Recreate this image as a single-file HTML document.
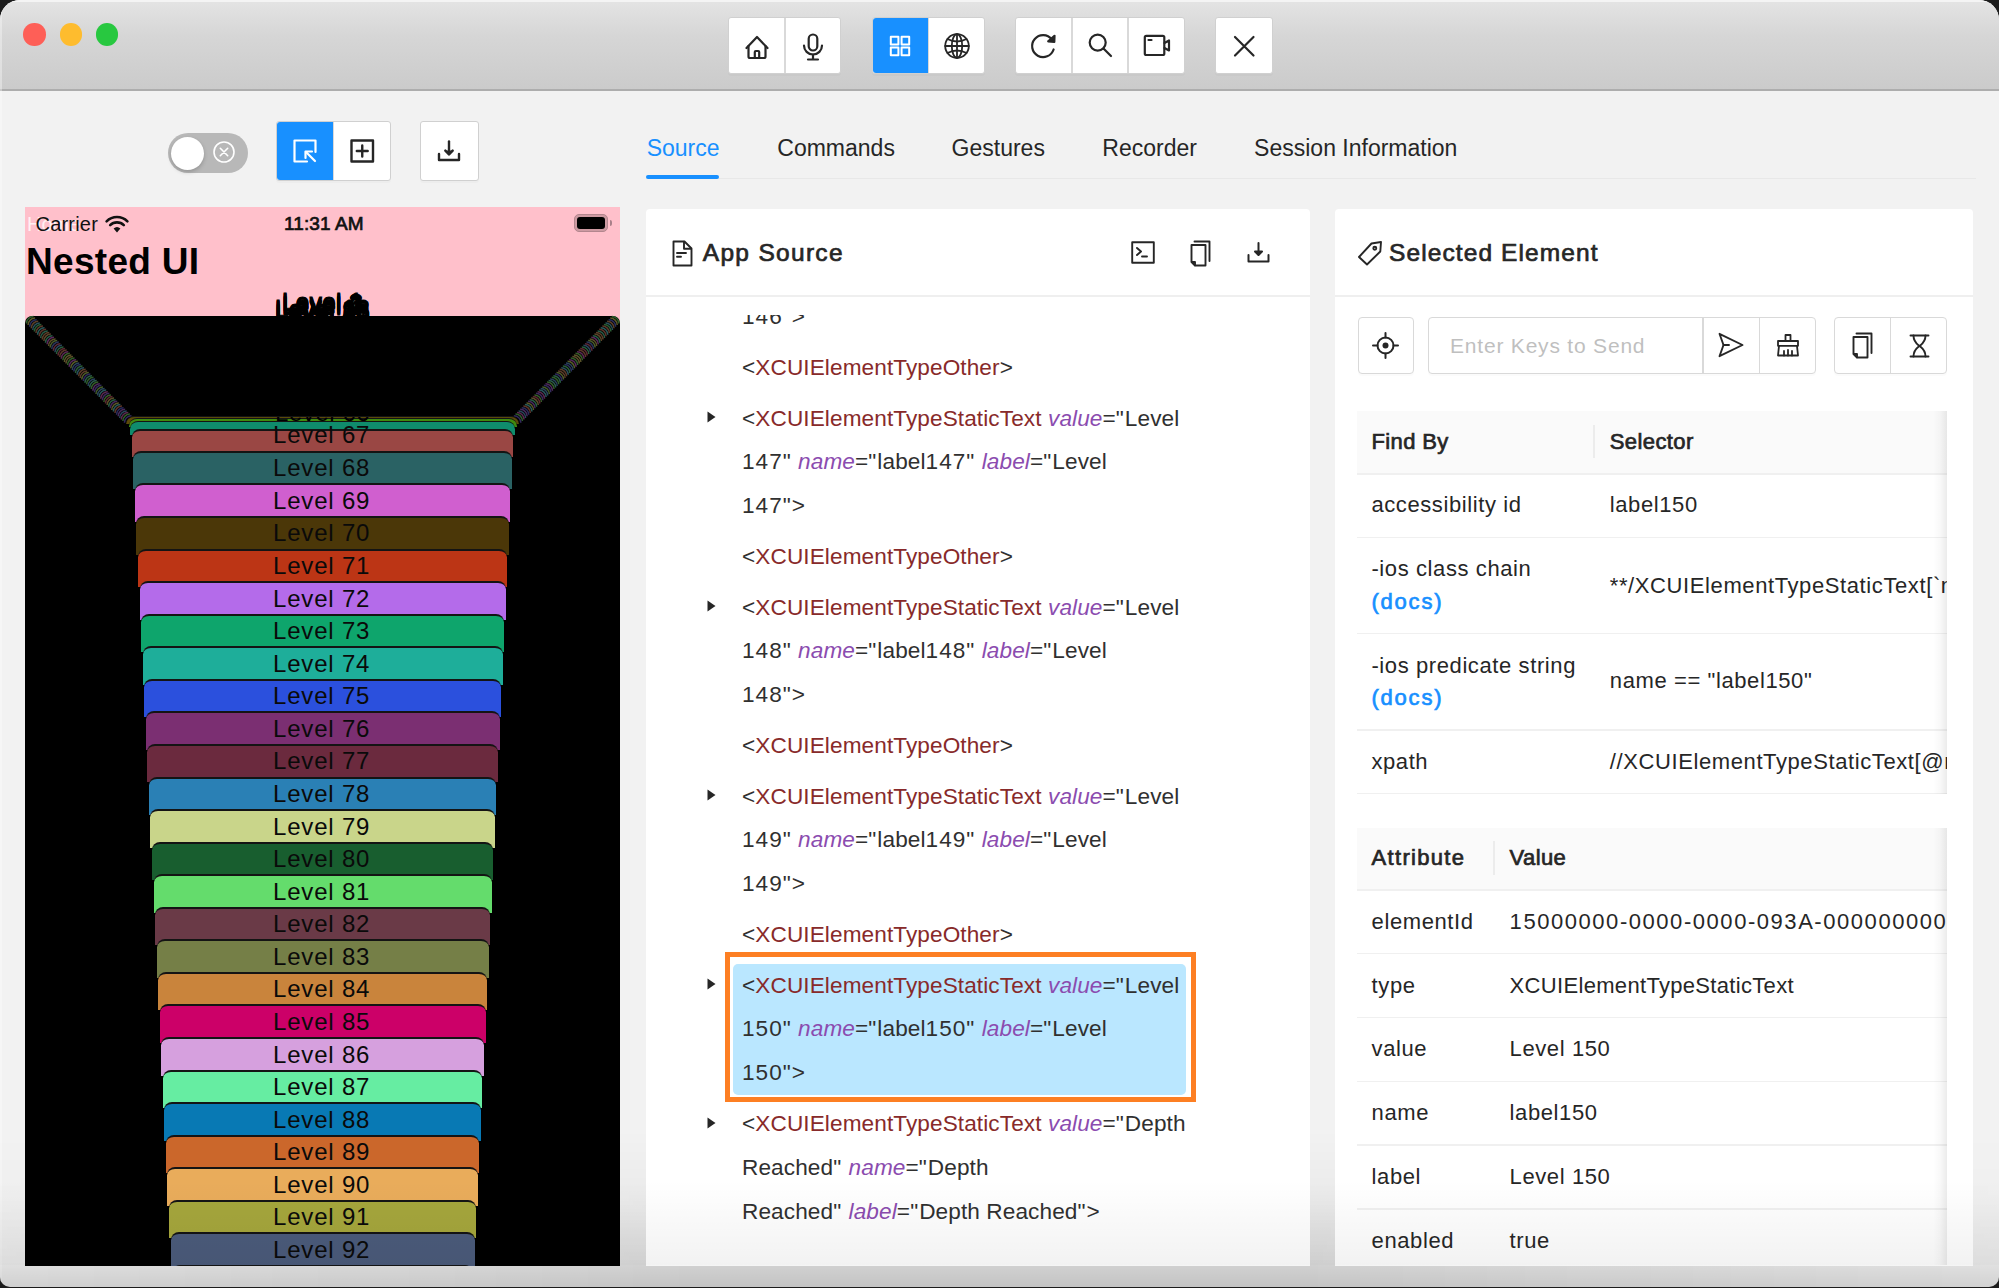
<!DOCTYPE html><html><head><meta charset="utf-8"><style>
*{margin:0;padding:0;box-sizing:border-box}
html,body{width:1999px;height:1288px;overflow:hidden;background:#1c1c1c;font-family:"Liberation Sans", sans-serif}
.a{position:absolute}
#win{position:absolute;left:0;top:0;width:1999px;height:1287px;border-radius:20px 20px 10px 10px;overflow:hidden;background:#f2f2f2}
.btn{position:absolute;background:#fff;border:1.5px solid #d9d9d9;}
.txt{position:absolute;white-space:pre;line-height:1}
svg{position:absolute;overflow:visible}
.d{font-style:normal;letter-spacing:1.0px}
</style></head><body><div id="win">
<div class="a" style="left:0;top:0;width:1999px;height:90.5px;background:linear-gradient(#e4e4e4,#d6d6d6 40%,#cbcbcb);border-bottom:2px solid #adadad"></div><div class="a" style="left:0;top:0;width:1999px;height:2px;background:#f4f4f4"></div><div class="a" style="left:0;top:0;width:1.5px;height:1287px;background:rgba(255,255,255,0.35)"></div><div class="a" style="left:23.400000000000002px;top:23.3px;width:22.4px;height:22.4px;border-radius:50%;background:#fe5f57"></div><div class="a" style="left:59.7px;top:23.3px;width:22.4px;height:22.4px;border-radius:50%;background:#febc2e"></div><div class="a" style="left:95.8px;top:23.3px;width:22.4px;height:22.4px;border-radius:50%;background:#28c840"></div><div class="a" style="left:728px;top:17px;width:113px;height:56.5px;background:#fff;border:1.5px solid #d0d0d0;border-radius:3px;box-shadow:0 2px 0 rgba(0,0,0,0.02)"></div><div class="a" style="left:784.25px;top:18px;width:1.5px;height:55px;background:#d9d9d9"></div><div class="a" style="left:872px;top:17px;width:113px;height:56.5px;background:#fff;border:1.5px solid #d0d0d0;border-radius:3px;box-shadow:0 2px 0 rgba(0,0,0,0.02)"></div><div class="a" style="left:927.25px;top:18px;width:1.5px;height:55px;background:#d9d9d9"></div><div class="a" style="left:873px;top:18px;width:55px;height:55px;background:#1890ff;border-radius:3px 0px 0px 3px"></div><div class="a" style="left:1015px;top:17px;width:170px;height:56.5px;background:#fff;border:1.5px solid #d0d0d0;border-radius:3px;box-shadow:0 2px 0 rgba(0,0,0,0.02)"></div><div class="a" style="left:1071.25px;top:18px;width:1.5px;height:55px;background:#d9d9d9"></div><div class="a" style="left:1127.25px;top:18px;width:1.5px;height:55px;background:#d9d9d9"></div><div class="a" style="left:1215px;top:17px;width:58px;height:56.5px;background:#fff;border:1.5px solid #d0d0d0;border-radius:3px;box-shadow:0 2px 0 rgba(0,0,0,0.02)"></div><svg style="left:744.5px;top:35px" width="24" height="24" viewBox="0 0 24 24" fill="none" stroke="#262626" stroke-width="2.2" stroke-linecap="round" stroke-linejoin="round"><path d="M1.5 13 L12 2 L22.5 13"/><path d="M3.5 11 V21.5 a1.5 1.5 0 0 0 1.5 1.5 H19 a1.5 1.5 0 0 0 1.5 -1.5 V11"/><path d="M9.8 23 V17 a1 1 0 0 1 1 -1 h2.4 a1 1 0 0 1 1 1 V23"/></svg><svg style="left:802px;top:33px" width="22" height="28" viewBox="0 0 22 28" fill="none" stroke="#262626" stroke-width="2.2" stroke-linecap="round" stroke-linejoin="round"><rect x="6.7" y="1.5" width="8.6" height="16" rx="4.3"/><path d="M2 12.5 a9 9 0 0 0 18 0"/><path d="M11 21.5 V26.5 M6 26.5 H16"/></svg><svg style="left:889px;top:34.5px" width="22" height="22" viewBox="0 0 22 22" fill="none" stroke="#fff" stroke-width="2" stroke-linecap="round" stroke-linejoin="round"><rect x="1.8" y="1.8" width="7.6" height="7.6"/><rect x="12.6" y="1.8" width="7.6" height="7.6"/><rect x="1.8" y="12.6" width="7.6" height="7.6"/><rect x="12.6" y="12.6" width="7.6" height="7.6"/></svg><svg style="left:943.5px;top:33px" width="26" height="26" viewBox="0 0 26 26" fill="none" stroke="#262626" stroke-width="1.8" stroke-linecap="round" stroke-linejoin="round"><circle cx="13" cy="13" r="11.8"/><path d="M1.2 13 H24.8 M13 1.2 V24.8"/><ellipse cx="13" cy="13" rx="5.2" ry="11.8"/><path d="M3.5 6 Q13 11 22.5 6 M3.5 20 Q13 15 22.5 20"/></svg><svg style="left:1031px;top:33px" width="26" height="26" viewBox="0 0 26 26" fill="none" stroke="#262626" stroke-width="2.2" stroke-linecap="round" stroke-linejoin="round"><path d="M22.6 16.5 A11 11 0 1 1 20.8 6.3"/><path d="M23.5 2.8 L23.3 9 L17.2 8.3 Z" fill="#262626"/></svg><svg style="left:1088px;top:33px" width="26" height="26" viewBox="0 0 26 26" fill="none" stroke="#262626" stroke-width="2.2" stroke-linecap="round" stroke-linejoin="round"><circle cx="9.7" cy="9.6" r="8"/><path d="M15.5 15.5 L23 23"/></svg><svg style="left:1143px;top:34px" width="28" height="23" viewBox="0 0 28 23" fill="none" stroke="#262626" stroke-width="2.2" stroke-linecap="round" stroke-linejoin="round"><rect x="1.8" y="1.8" width="19.5" height="19.2" rx="1.5"/><path d="M21.5 9 L26 6.5 V16.5 L21.5 14"/><path d="M5.5 6 H8.5"/></svg><svg style="left:1233px;top:34.5px" width="22" height="22" viewBox="0 0 22 22" fill="none" stroke="#262626" stroke-width="2.2" stroke-linecap="round" stroke-linejoin="round"><path d="M2 2 L20.5 20.5 M20.5 2 L2 20.5"/></svg><div class="a" style="left:167.5px;top:133px;width:80px;height:40px;border-radius:20px;background:#b8b8b8"></div><div class="a" style="left:170.5px;top:136.5px;width:33px;height:33px;border-radius:50%;background:#fff;box-shadow:0 2px 4px rgba(0,0,0,0.2)"></div><svg style="left:212.5px;top:140.5px" width="22" height="22" viewBox="0 0 22 22" fill="none" stroke="#fff" stroke-width="1.6" stroke-linecap="round" stroke-linejoin="round"><circle cx="11" cy="11" r="10"/><path d="M7.3 7.3 L14.7 14.7 M14.7 7.3 L7.3 14.7"/></svg><div class="a" style="left:275.5px;top:121px;width:115.5px;height:59.5px;background:#fff;border:1.5px solid #d0d0d0;border-radius:3px;box-shadow:0 2px 0 rgba(0,0,0,0.02)"></div><div class="a" style="left:332.25px;top:122px;width:1.5px;height:58px;background:#d9d9d9"></div><div class="a" style="left:276.5px;top:122px;width:56.5px;height:58px;background:#1890ff;border-radius:3px 0px 0px 3px"></div><div class="a" style="left:420px;top:121px;width:58.5px;height:59.5px;background:#fff;border:1.5px solid #d0d0d0;border-radius:3px;box-shadow:0 2px 0 rgba(0,0,0,0.02)"></div><svg style="left:293px;top:139px" width="24" height="24" viewBox="0 0 24 24" fill="none" stroke="#fff" stroke-width="2.2" stroke-linecap="round" stroke-linejoin="round"><path d="M14 22.5 H1.5 V1.5 H22.5 V13"/><path d="M22 22 L13 13"/><path d="M12.5 19 V12.5 H19"/></svg><svg style="left:349.5px;top:139px" width="25" height="24" viewBox="0 0 25 24" fill="none" stroke="#262626" stroke-width="2.4" stroke-linecap="round" stroke-linejoin="round"><rect x="1.5" y="1.5" width="21.5" height="21"/><path d="M12.25 6.5 V17.5 M6.8 12 H17.7"/></svg><svg style="left:437px;top:140px" width="24" height="22" viewBox="0 0 24 22" fill="none" stroke="#262626" stroke-width="2.4" stroke-linecap="round" stroke-linejoin="round"><path d="M12 1.5 V14"/><path d="M8.3 10.6 L12 14.5 L15.7 10.6" fill="#262626"/><path d="M2 14 V20 H22 V14"/></svg><div class="a" style="left:646px;top:177.6px;width:1330px;height:1.5px;background:#e8e8e8"></div><div class="txt" style="left:646.7px;top:137.03px;font-size:23px;color:#1890ff;font-weight:400;font-style:normal;">Source</div><div class="txt" style="left:777.3px;top:137.03px;font-size:23px;color:#262626;font-weight:400;font-style:normal;">Commands</div><div class="txt" style="left:951.6px;top:137.03px;font-size:23px;color:#262626;font-weight:400;font-style:normal;">Gestures</div><div class="txt" style="left:1102.3px;top:137.03px;font-size:23px;color:#262626;font-weight:400;font-style:normal;">Recorder</div><div class="txt" style="left:1254.1px;top:137.03px;font-size:23px;color:#262626;font-weight:400;font-style:normal;">Session Information</div><div class="a" style="left:645.5px;top:174.5px;width:73px;height:4px;background:#1890ff;border-radius:2px"></div><div class="a" style="left:0;top:1130px;width:1999px;height:158px;background:linear-gradient(rgba(0,0,0,0),rgba(0,0,0,0.03) 44%,rgba(0,0,0,0.1) 85.5%,rgba(0,0,0,0.1));-webkit-mask-image:linear-gradient(to right,rgba(0,0,0,0.4),#000 35%,#000 65%,rgba(0,0,0,0.35))"></div><div class="a" style="left:25px;top:207px;width:595px;height:1058.5px;background:#ffc0cb;overflow:hidden"><div class="txt" style="left:2px;top:6.67px;font-size:20px;color:rgba(255,255,255,0.8);font-weight:400;font-style:normal;">Home</div><div class="txt" style="left:10.5px;top:6.67px;font-size:20px;color:#111;font-weight:400;font-style:normal;letter-spacing:0.2px">Carrier</div><svg style="left:79.5px;top:7.5px" width="24" height="18" viewBox="0 0 24 18"><path d="M12 17.5 L8.6 13.6 A5 5 0 0 1 15.4 13.6 Z" fill="#111"/><path d="M5.2 10.2 A9.6 9.6 0 0 1 18.8 10.2" fill="none" stroke="#111" stroke-width="2.6" stroke-linecap="round"/><path d="M1.6 6.3 A14.8 14.8 0 0 1 22.4 6.3" fill="none" stroke="#111" stroke-width="2.6" stroke-linecap="round"/></svg><div class="txt" style="left:259px;top:7.42px;font-size:19px;color:#111;font-weight:400;font-style:normal;-webkit-text-stroke:0.7px #111;letter-spacing:0.1px">11:31 AM</div><div class="a" style="left:549px;top:7.099999999999994px;width:34px;height:17.6px;border:1.6px solid #b3868e;border-radius:5px;padding:1.6px;background:#cd9aa2"><div style="width:100%;height:100%;background:#000;border-radius:3px"></div></div><div class="a" style="left:584.6px;top:13.300000000000011px;width:2px;height:5.5px;background:#a9808a;border-radius:0 3px 3px 0"></div><div class="txt" style="left:1.1000000000000014px;top:36.38px;font-size:37px;color:#000;font-weight:700;font-style:normal;letter-spacing:0.3px">Nested UI</div><div class="a" style="left:0;top:78px;width:595px;height:31px;overflow:hidden"><div class="txt" style="left:0;width:595px;text-align:center;top:4.98px;font-size:24px;color:#000;letter-spacing:0.55px;-webkit-text-stroke:0.8px #000">Level 1</div><div class="txt" style="left:0;width:595px;text-align:center;top:6.33px;font-size:24px;color:#000;letter-spacing:0.55px;-webkit-text-stroke:0.8px #000">Level 3</div><div class="txt" style="left:0;width:595px;text-align:center;top:7.68px;font-size:24px;color:#000;letter-spacing:0.55px;-webkit-text-stroke:0.8px #000">Level 5</div><div class="txt" style="left:0;width:595px;text-align:center;top:9.03px;font-size:24px;color:#000;letter-spacing:0.55px;-webkit-text-stroke:0.8px #000">Level 7</div><div class="txt" style="left:0;width:595px;text-align:center;top:10.38px;font-size:24px;color:#000;letter-spacing:0.55px;-webkit-text-stroke:0.8px #000">Level 9</div><div class="txt" style="left:0;width:595px;text-align:center;top:11.73px;font-size:24px;color:#000;letter-spacing:0.55px;-webkit-text-stroke:0.8px #000">Level 12</div><div class="txt" style="left:0;width:595px;text-align:center;top:13.08px;font-size:24px;color:#000;letter-spacing:0.55px;-webkit-text-stroke:0.8px #000">Level 18</div><div class="txt" style="left:0;width:595px;text-align:center;top:14.43px;font-size:24px;color:#000;letter-spacing:0.55px;-webkit-text-stroke:0.8px #000">Level 25</div><div class="txt" style="left:0;width:595px;text-align:center;top:15.78px;font-size:24px;color:#000;letter-spacing:0.55px;-webkit-text-stroke:0.8px #000">Level 33</div><div class="txt" style="left:0;width:595px;text-align:center;top:17.13px;font-size:24px;color:#000;letter-spacing:0.55px;-webkit-text-stroke:0.8px #000">Level 41</div><div class="txt" style="left:0;width:595px;text-align:center;top:18.48px;font-size:24px;color:#000;letter-spacing:0.55px;-webkit-text-stroke:0.8px #000">Level 50</div><div class="txt" style="left:0;width:595px;text-align:center;top:19.83px;font-size:24px;color:#000;letter-spacing:0.55px;-webkit-text-stroke:0.8px #000">Level 58</div></div><div class="a" style="left:0;top:109px;width:595px;height:1000px;background:#000;border-radius:7px 7px 0 0"></div><svg style="left:0;top:0" width="595" height="400" fill="none" stroke-width="1.5"><path d="M1.50 116.50 A7 7 0 0 1 8.50 109.50" stroke="#2c5b29"/><path d="M586.80 109.50 A7 7 0 0 1 593.80 116.50" stroke="#2c5b29"/><path d="M3.08 118.10 A7 7 0 0 1 10.08 111.10" stroke="#5b5729"/><path d="M585.22 111.10 A7 7 0 0 1 592.22 118.10" stroke="#5b5729"/><path d="M4.66 119.70 A7 7 0 0 1 11.66 112.70" stroke="#292e5b"/><path d="M583.64 112.70 A7 7 0 0 1 590.64 119.70" stroke="#292e5b"/><path d="M6.24 121.30 A7 7 0 0 1 13.24 114.30" stroke="#5b3f29"/><path d="M582.06 114.30 A7 7 0 0 1 589.06 121.30" stroke="#5b3f29"/><path d="M7.82 122.90 A7 7 0 0 1 14.82 115.90" stroke="#29505b"/><path d="M580.48 115.90 A7 7 0 0 1 587.48 122.90" stroke="#29505b"/><path d="M9.40 124.50 A7 7 0 0 1 16.40 117.50" stroke="#295b33"/><path d="M578.90 117.50 A7 7 0 0 1 585.90 124.50" stroke="#295b33"/><path d="M10.98 126.10 A7 7 0 0 1 17.98 119.10" stroke="#5b3a29"/><path d="M577.32 119.10 A7 7 0 0 1 584.32 126.10" stroke="#5b3a29"/><path d="M12.56 127.70 A7 7 0 0 1 19.56 120.70" stroke="#29595b"/><path d="M575.74 120.70 A7 7 0 0 1 582.74 127.70" stroke="#29595b"/><path d="M14.14 129.30 A7 7 0 0 1 21.14 122.30" stroke="#5b3429"/><path d="M574.16 122.30 A7 7 0 0 1 581.16 129.30" stroke="#5b3429"/><path d="M15.72 130.90 A7 7 0 0 1 22.72 123.90" stroke="#295b47"/><path d="M572.58 123.90 A7 7 0 0 1 579.58 130.90" stroke="#295b47"/><path d="M17.30 132.50 A7 7 0 0 1 24.30 125.50" stroke="#5b3e29"/><path d="M571.00 125.50 A7 7 0 0 1 578.00 132.50" stroke="#5b3e29"/><path d="M18.88 134.10 A7 7 0 0 1 25.88 127.10" stroke="#5b4429"/><path d="M569.42 127.10 A7 7 0 0 1 576.42 134.10" stroke="#5b4429"/><path d="M20.46 135.70 A7 7 0 0 1 27.46 128.70" stroke="#295b44"/><path d="M567.84 128.70 A7 7 0 0 1 574.84 135.70" stroke="#295b44"/><path d="M22.04 137.30 A7 7 0 0 1 29.04 130.30" stroke="#59295b"/><path d="M566.26 130.30 A7 7 0 0 1 573.26 137.30" stroke="#59295b"/><path d="M23.62 138.90 A7 7 0 0 1 30.62 131.90" stroke="#5b4e29"/><path d="M564.68 131.90 A7 7 0 0 1 571.68 138.90" stroke="#5b4e29"/><path d="M25.20 140.50 A7 7 0 0 1 32.20 133.50" stroke="#4a5b29"/><path d="M563.10 133.50 A7 7 0 0 1 570.10 140.50" stroke="#4a5b29"/><path d="M26.78 142.10 A7 7 0 0 1 33.78 135.10" stroke="#29355b"/><path d="M561.52 135.10 A7 7 0 0 1 568.52 142.10" stroke="#29355b"/><path d="M28.36 143.70 A7 7 0 0 1 35.36 136.70" stroke="#5b2939"/><path d="M559.94 136.70 A7 7 0 0 1 566.94 143.70" stroke="#5b2939"/><path d="M29.94 145.30 A7 7 0 0 1 36.94 138.30" stroke="#29445b"/><path d="M558.36 138.30 A7 7 0 0 1 565.36 145.30" stroke="#29445b"/><path d="M31.52 146.90 A7 7 0 0 1 38.52 139.90" stroke="#295b3c"/><path d="M556.78 139.90 A7 7 0 0 1 563.78 146.90" stroke="#295b3c"/><path d="M33.10 148.50 A7 7 0 0 1 40.10 141.50" stroke="#5b2930"/><path d="M555.20 141.50 A7 7 0 0 1 562.20 148.50" stroke="#5b2930"/><path d="M34.68 150.10 A7 7 0 0 1 41.68 143.10" stroke="#5b3729"/><path d="M553.62 143.10 A7 7 0 0 1 560.62 150.10" stroke="#5b3729"/><path d="M36.26 151.70 A7 7 0 0 1 43.26 144.70" stroke="#5b2954"/><path d="M552.04 144.70 A7 7 0 0 1 559.04 151.70" stroke="#5b2954"/><path d="M37.84 153.30 A7 7 0 0 1 44.84 146.30" stroke="#365b29"/><path d="M550.46 146.30 A7 7 0 0 1 557.46 153.30" stroke="#365b29"/><path d="M39.42 154.90 A7 7 0 0 1 46.42 147.90" stroke="#5b5529"/><path d="M548.88 147.90 A7 7 0 0 1 555.88 154.90" stroke="#5b5529"/><path d="M41.00 156.50 A7 7 0 0 1 48.00 149.50" stroke="#5b4c29"/><path d="M547.30 149.50 A7 7 0 0 1 554.30 156.50" stroke="#5b4c29"/><path d="M42.58 158.10 A7 7 0 0 1 49.58 151.10" stroke="#305b29"/><path d="M545.72 151.10 A7 7 0 0 1 552.72 158.10" stroke="#305b29"/><path d="M44.16 159.70 A7 7 0 0 1 51.16 152.70" stroke="#56295b"/><path d="M544.14 152.70 A7 7 0 0 1 551.14 159.70" stroke="#56295b"/><path d="M45.74 161.30 A7 7 0 0 1 52.74 154.30" stroke="#575b29"/><path d="M542.56 154.30 A7 7 0 0 1 549.56 161.30" stroke="#575b29"/><path d="M47.32 162.90 A7 7 0 0 1 54.32 155.90" stroke="#29435b"/><path d="M540.98 155.90 A7 7 0 0 1 547.98 162.90" stroke="#29435b"/><path d="M48.90 164.50 A7 7 0 0 1 55.90 157.50" stroke="#29315b"/><path d="M539.40 157.50 A7 7 0 0 1 546.40 164.50" stroke="#29315b"/><path d="M50.48 166.10 A7 7 0 0 1 57.48 159.10" stroke="#295b35"/><path d="M537.82 159.10 A7 7 0 0 1 544.82 166.10" stroke="#295b35"/><path d="M52.06 167.70 A7 7 0 0 1 59.06 160.70" stroke="#294d5b"/><path d="M536.24 160.70 A7 7 0 0 1 543.24 167.70" stroke="#294d5b"/><path d="M53.64 169.30 A7 7 0 0 1 60.64 162.30" stroke="#5b3c29"/><path d="M534.66 162.30 A7 7 0 0 1 541.66 169.30" stroke="#5b3c29"/><path d="M55.22 170.90 A7 7 0 0 1 62.22 163.90" stroke="#5b3b29"/><path d="M533.08 163.90 A7 7 0 0 1 540.08 170.90" stroke="#5b3b29"/><path d="M56.80 172.50 A7 7 0 0 1 63.80 165.50" stroke="#4f5b29"/><path d="M531.50 165.50 A7 7 0 0 1 538.50 172.50" stroke="#4f5b29"/><path d="M58.38 174.10 A7 7 0 0 1 65.38 167.10" stroke="#2d295b"/><path d="M529.92 167.10 A7 7 0 0 1 536.92 174.10" stroke="#2d295b"/><path d="M59.96 175.70 A7 7 0 0 1 66.96 168.70" stroke="#295b45"/><path d="M528.34 168.70 A7 7 0 0 1 535.34 175.70" stroke="#295b45"/><path d="M61.54 177.30 A7 7 0 0 1 68.54 170.30" stroke="#2f5b29"/><path d="M526.76 170.30 A7 7 0 0 1 533.76 177.30" stroke="#2f5b29"/><path d="M63.12 178.90 A7 7 0 0 1 70.12 171.90" stroke="#29415b"/><path d="M525.18 171.90 A7 7 0 0 1 532.18 178.90" stroke="#29415b"/><path d="M64.70 180.50 A7 7 0 0 1 71.70 173.50" stroke="#295b4d"/><path d="M523.60 173.50 A7 7 0 0 1 530.60 180.50" stroke="#295b4d"/><path d="M66.28 182.10 A7 7 0 0 1 73.28 175.10" stroke="#335b29"/><path d="M522.02 175.10 A7 7 0 0 1 529.02 182.10" stroke="#335b29"/><path d="M67.86 183.70 A7 7 0 0 1 74.86 176.70" stroke="#4f295b"/><path d="M520.44 176.70 A7 7 0 0 1 527.44 183.70" stroke="#4f295b"/><path d="M69.44 185.30 A7 7 0 0 1 76.44 178.30" stroke="#33295b"/><path d="M518.86 178.30 A7 7 0 0 1 525.86 185.30" stroke="#33295b"/><path d="M71.02 186.90 A7 7 0 0 1 78.02 179.90" stroke="#445b29"/><path d="M517.28 179.90 A7 7 0 0 1 524.28 186.90" stroke="#445b29"/><path d="M72.60 188.50 A7 7 0 0 1 79.60 181.50" stroke="#29455b"/><path d="M515.70 181.50 A7 7 0 0 1 522.70 188.50" stroke="#29455b"/><path d="M74.18 190.10 A7 7 0 0 1 81.18 183.10" stroke="#29545b"/><path d="M514.12 183.10 A7 7 0 0 1 521.12 190.10" stroke="#29545b"/><path d="M75.76 191.70 A7 7 0 0 1 82.76 184.70" stroke="#5b294f"/><path d="M512.54 184.70 A7 7 0 0 1 519.54 191.70" stroke="#5b294f"/><path d="M77.34 193.30 A7 7 0 0 1 84.34 186.30" stroke="#3c295b"/><path d="M510.96 186.30 A7 7 0 0 1 517.96 193.30" stroke="#3c295b"/><path d="M78.92 194.90 A7 7 0 0 1 85.92 187.90" stroke="#375b29"/><path d="M509.38 187.90 A7 7 0 0 1 516.38 194.90" stroke="#375b29"/><path d="M80.50 196.50 A7 7 0 0 1 87.50 189.50" stroke="#5b292f"/><path d="M507.80 189.50 A7 7 0 0 1 514.80 196.50" stroke="#5b292f"/><path d="M82.08 198.10 A7 7 0 0 1 89.08 191.10" stroke="#5b4d29"/><path d="M506.22 191.10 A7 7 0 0 1 513.22 198.10" stroke="#5b4d29"/><path d="M83.66 199.70 A7 7 0 0 1 90.66 192.70" stroke="#295b42"/><path d="M504.64 192.70 A7 7 0 0 1 511.64 199.70" stroke="#295b42"/><path d="M85.24 201.30 A7 7 0 0 1 92.24 194.30" stroke="#44295b"/><path d="M503.06 194.30 A7 7 0 0 1 510.06 201.30" stroke="#44295b"/><path d="M86.82 202.90 A7 7 0 0 1 93.82 195.90" stroke="#5b5729"/><path d="M501.48 195.90 A7 7 0 0 1 508.48 202.90" stroke="#5b5729"/><path d="M88.40 204.50 A7 7 0 0 1 95.40 197.50" stroke="#295b58"/><path d="M499.90 197.50 A7 7 0 0 1 506.90 204.50" stroke="#295b58"/><path d="M89.98 206.10 A7 7 0 0 1 96.98 199.10" stroke="#5b3529"/><path d="M498.32 199.10 A7 7 0 0 1 505.32 206.10" stroke="#5b3529"/><path d="M91.56 207.70 A7 7 0 0 1 98.56 200.70" stroke="#29295b"/><path d="M496.74 200.70 A7 7 0 0 1 503.74 207.70" stroke="#29295b"/><path d="M93.14 209.30 A7 7 0 0 1 100.14 202.30" stroke="#46295b"/><path d="M495.16 202.30 A7 7 0 0 1 502.16 209.30" stroke="#46295b"/><path d="M94.72 210.90 A7 7 0 0 1 101.72 203.90" stroke="#29455b"/><path d="M493.58 203.90 A7 7 0 0 1 500.58 210.90" stroke="#29455b"/><path d="M96.30 212.50 A7 7 0 0 1 103.30 205.50" stroke="#5b294f"/><path d="M492.00 205.50 A7 7 0 0 1 499.00 212.50" stroke="#5b294f"/><path d="M97.88 214.10 A7 7 0 0 1 104.88 207.10" stroke="#2f5b29"/><path d="M490.42 207.10 A7 7 0 0 1 497.42 214.10" stroke="#2f5b29"/><path d="M99.46 215.70 A7 7 0 0 1 106.46 208.70" stroke="#31295b"/><path d="M488.84 208.70 A7 7 0 0 1 495.84 215.70" stroke="#31295b"/></svg><div class="a" style="left:101.04px;top:209.30px;width:393.22px;height:7.60px;background:#5c4a08;border-top:1.3px solid #141414;border-radius:8px 8px 0 0"></div><div class="a" style="left:103.70px;top:210.90px;width:387.90px;height:9.50px;background:#3f8a0e;border-top:1.3px solid #141414;border-radius:8px 8px 0 0"></div><div class="a" style="left:105.25px;top:214.40px;width:384.80px;height:13.90px;background:#0f8c6c;border-top:1.3px solid #141414;border-radius:8px 8px 0 0"></div><div class="a" style="left:0;top:209.8px;width:595px;height:14px;overflow:hidden"><div class="txt" style="left:105.25px;width:384.80px;text-align:center;top:-15.62px;font-size:24px;color:#000;letter-spacing:0.55px">Level 66</div></div><div class="a" style="left:106.80px;top:222.30px;width:381.70px;height:27.50px;background:#9a4744;border-top:2px solid #141414;border-radius:8px 8px 0 0"></div><div class="txt" style="left:105.80px;width:381.70px;text-align:center;top:215.68px;font-size:24px;color:#0a0a0a;letter-spacing:0.8px">Level 67</div><div class="a" style="left:108.35px;top:243.80px;width:378.60px;height:38.57px;background:#2a6264;border-top:2px solid #141414;border-radius:8px 8px 0 0"></div><div class="txt" style="left:107.35px;width:378.60px;text-align:center;top:249.28px;font-size:24px;color:#0a0a0a;letter-spacing:0.8px">Level 68</div><div class="a" style="left:109.90px;top:276.37px;width:375.50px;height:38.57px;background:#d05fcf;border-top:2px solid #141414;border-radius:8px 8px 0 0"></div><div class="txt" style="left:108.90px;width:375.50px;text-align:center;top:281.85px;font-size:24px;color:#0a0a0a;letter-spacing:0.8px">Level 69</div><div class="a" style="left:111.45px;top:308.94px;width:372.40px;height:38.57px;background:#4b3708;border-top:2px solid #141414;border-radius:8px 8px 0 0"></div><div class="txt" style="left:110.45px;width:372.40px;text-align:center;top:314.42px;font-size:24px;color:#0a0a0a;letter-spacing:0.8px">Level 70</div><div class="a" style="left:113.00px;top:341.51px;width:369.30px;height:38.57px;background:#bc3515;border-top:2px solid #141414;border-radius:8px 8px 0 0"></div><div class="txt" style="left:112.00px;width:369.30px;text-align:center;top:346.99px;font-size:24px;color:#0a0a0a;letter-spacing:0.8px">Level 71</div><div class="a" style="left:114.55px;top:374.08px;width:366.20px;height:38.57px;background:#b46bea;border-top:2px solid #141414;border-radius:8px 8px 0 0"></div><div class="txt" style="left:113.55px;width:366.20px;text-align:center;top:379.56px;font-size:24px;color:#0a0a0a;letter-spacing:0.8px">Level 72</div><div class="a" style="left:116.10px;top:406.65px;width:363.10px;height:38.57px;background:#0ea56c;border-top:2px solid #141414;border-radius:8px 8px 0 0"></div><div class="txt" style="left:115.10px;width:363.10px;text-align:center;top:412.13px;font-size:24px;color:#0a0a0a;letter-spacing:0.8px">Level 73</div><div class="a" style="left:117.65px;top:439.22px;width:360.00px;height:38.57px;background:#1eae9a;border-top:2px solid #141414;border-radius:8px 8px 0 0"></div><div class="txt" style="left:116.65px;width:360.00px;text-align:center;top:444.70px;font-size:24px;color:#0a0a0a;letter-spacing:0.8px">Level 74</div><div class="a" style="left:119.20px;top:471.79px;width:356.90px;height:38.57px;background:#2b50dd;border-top:2px solid #141414;border-radius:8px 8px 0 0"></div><div class="txt" style="left:118.20px;width:356.90px;text-align:center;top:477.27px;font-size:24px;color:#0a0a0a;letter-spacing:0.8px">Level 75</div><div class="a" style="left:120.75px;top:504.36px;width:353.80px;height:38.57px;background:#7b2f72;border-top:2px solid #141414;border-radius:8px 8px 0 0"></div><div class="txt" style="left:119.75px;width:353.80px;text-align:center;top:509.84px;font-size:24px;color:#0a0a0a;letter-spacing:0.8px">Level 76</div><div class="a" style="left:122.30px;top:536.93px;width:350.70px;height:38.57px;background:#6b2a3e;border-top:2px solid #141414;border-radius:8px 8px 0 0"></div><div class="txt" style="left:121.30px;width:350.70px;text-align:center;top:542.41px;font-size:24px;color:#0a0a0a;letter-spacing:0.8px">Level 77</div><div class="a" style="left:123.85px;top:569.50px;width:347.60px;height:38.57px;background:#2a80b5;border-top:2px solid #141414;border-radius:8px 8px 0 0"></div><div class="txt" style="left:122.85px;width:347.60px;text-align:center;top:574.98px;font-size:24px;color:#0a0a0a;letter-spacing:0.8px">Level 78</div><div class="a" style="left:125.40px;top:602.07px;width:344.50px;height:38.57px;background:#c9d58a;border-top:2px solid #141414;border-radius:8px 8px 0 0"></div><div class="txt" style="left:124.40px;width:344.50px;text-align:center;top:607.55px;font-size:24px;color:#0a0a0a;letter-spacing:0.8px">Level 79</div><div class="a" style="left:126.95px;top:634.64px;width:341.40px;height:38.57px;background:#185e2f;border-top:2px solid #141414;border-radius:8px 8px 0 0"></div><div class="txt" style="left:125.95px;width:341.40px;text-align:center;top:640.12px;font-size:24px;color:#0a0a0a;letter-spacing:0.8px">Level 80</div><div class="a" style="left:128.50px;top:667.21px;width:338.30px;height:38.57px;background:#64dc6c;border-top:2px solid #141414;border-radius:8px 8px 0 0"></div><div class="txt" style="left:127.50px;width:338.30px;text-align:center;top:672.69px;font-size:24px;color:#0a0a0a;letter-spacing:0.8px">Level 81</div><div class="a" style="left:130.05px;top:699.78px;width:335.20px;height:38.57px;background:#6a3a47;border-top:2px solid #141414;border-radius:8px 8px 0 0"></div><div class="txt" style="left:129.05px;width:335.20px;text-align:center;top:705.26px;font-size:24px;color:#0a0a0a;letter-spacing:0.8px">Level 82</div><div class="a" style="left:131.60px;top:732.35px;width:332.10px;height:38.57px;background:#757f47;border-top:2px solid #141414;border-radius:8px 8px 0 0"></div><div class="txt" style="left:130.60px;width:332.10px;text-align:center;top:737.83px;font-size:24px;color:#0a0a0a;letter-spacing:0.8px">Level 83</div><div class="a" style="left:133.15px;top:764.92px;width:329.00px;height:38.57px;background:#c9843c;border-top:2px solid #141414;border-radius:8px 8px 0 0"></div><div class="txt" style="left:132.15px;width:329.00px;text-align:center;top:770.40px;font-size:24px;color:#0a0a0a;letter-spacing:0.8px">Level 84</div><div class="a" style="left:134.70px;top:797.49px;width:325.90px;height:38.57px;background:#cc0068;border-top:2px solid #141414;border-radius:8px 8px 0 0"></div><div class="txt" style="left:133.70px;width:325.90px;text-align:center;top:802.97px;font-size:24px;color:#0a0a0a;letter-spacing:0.8px">Level 85</div><div class="a" style="left:136.25px;top:830.06px;width:322.80px;height:38.57px;background:#d6a0de;border-top:2px solid #141414;border-radius:8px 8px 0 0"></div><div class="txt" style="left:135.25px;width:322.80px;text-align:center;top:835.54px;font-size:24px;color:#0a0a0a;letter-spacing:0.8px">Level 86</div><div class="a" style="left:137.80px;top:862.63px;width:319.70px;height:38.57px;background:#66eda2;border-top:2px solid #141414;border-radius:8px 8px 0 0"></div><div class="txt" style="left:136.80px;width:319.70px;text-align:center;top:868.11px;font-size:24px;color:#0a0a0a;letter-spacing:0.8px">Level 87</div><div class="a" style="left:139.35px;top:895.20px;width:316.60px;height:38.57px;background:#0879b4;border-top:2px solid #141414;border-radius:8px 8px 0 0"></div><div class="txt" style="left:138.35px;width:316.60px;text-align:center;top:900.68px;font-size:24px;color:#0a0a0a;letter-spacing:0.8px">Level 88</div><div class="a" style="left:140.90px;top:927.77px;width:313.50px;height:38.57px;background:#cb672b;border-top:2px solid #141414;border-radius:8px 8px 0 0"></div><div class="txt" style="left:139.90px;width:313.50px;text-align:center;top:933.25px;font-size:24px;color:#0a0a0a;letter-spacing:0.8px">Level 89</div><div class="a" style="left:142.45px;top:960.34px;width:310.40px;height:38.57px;background:#e9ac5b;border-top:2px solid #141414;border-radius:8px 8px 0 0"></div><div class="txt" style="left:141.45px;width:310.40px;text-align:center;top:965.82px;font-size:24px;color:#0a0a0a;letter-spacing:0.8px">Level 90</div><div class="a" style="left:144.00px;top:992.91px;width:307.30px;height:38.57px;background:#a5a63c;border-top:2px solid #141414;border-radius:8px 8px 0 0"></div><div class="txt" style="left:143.00px;width:307.30px;text-align:center;top:998.39px;font-size:24px;color:#0a0a0a;letter-spacing:0.8px">Level 91</div><div class="a" style="left:145.55px;top:1025.48px;width:304.20px;height:38.57px;background:#4b5b7b;border-top:2px solid #141414;border-radius:8px 8px 0 0"></div><div class="txt" style="left:144.55px;width:304.20px;text-align:center;top:1030.96px;font-size:24px;color:#0a0a0a;letter-spacing:0.8px">Level 92</div><div class="a" style="left:147.10px;top:1058.05px;width:301.10px;height:38.57px;background:#3a6a5a;border-top:2px solid #141414;border-radius:8px 8px 0 0"></div><div class="txt" style="left:146.10px;width:301.10px;text-align:center;top:1063.53px;font-size:24px;color:#0a0a0a;letter-spacing:0.8px">Level 93</div></div><div class="a" style="left:646px;top:209px;width:664px;height:1056.5px;background:#fff;border-radius:4px 4px 0 0"></div><div class="a" style="left:646px;top:295px;width:664px;height:1.5px;background:#efefef"></div><svg style="left:671.5px;top:239.5px" width="21" height="27" viewBox="0 0 21 27" fill="none" stroke="#262626" stroke-width="1.9" stroke-linecap="round" stroke-linejoin="round"><path d="M1.5 1.5 H12.5 L19.5 8.5 V25.5 H1.5 Z"/><path d="M12 1.8 V8.8 H19"/><path d="M5 13 H14 M5 16.8 H9"/></svg><div class="txt" style="left:702.8px;top:240.96px;font-size:24.5px;color:#262626;font-weight:400;font-style:normal;-webkit-text-stroke:0.7px #262626;letter-spacing:1.3px">App Source</div><svg style="left:1130.5px;top:241px" width="24" height="23" viewBox="0 0 24 23" fill="none" stroke="#262626" stroke-width="1.9" stroke-linecap="round" stroke-linejoin="round"><rect x="1.2" y="1.2" width="21.6" height="20.6"/><path d="M6 7 L10 10.5 L6 14 M11 15.5 H16"/></svg><svg style="left:1190px;top:239.5px" width="21" height="27" viewBox="0 0 21 27" fill="none" stroke="#262626" stroke-width="1.9" stroke-linecap="round" stroke-linejoin="round"><path d="M4.5 1.5 H19.5 V21"/><path d="M1.5 5 H15.5 V25.5 H5 L1.5 22 Z"/><path d="M1.8 22 H5 V25.3"/></svg><svg style="left:1247px;top:242px" width="23" height="21" viewBox="0 0 23 21" fill="none" stroke="#262626" stroke-width="2" stroke-linecap="round" stroke-linejoin="round"><path d="M11.5 1 V12.5"/><path d="M8 9.5 L11.5 13 L15 9.5 Z" fill="#262626"/><path d="M1.5 13 V19.5 H21.5 V13"/></svg><div class="a" style="left:646px;top:315px;width:664px;height:950px;overflow:hidden"><div class="a" style="left:78.79999999999995px;top:637px;width:471.20000000000005px;height:150.4000000000001px;border:5.2px solid #fd7f23"></div><div class="a" style="left:87px;top:648.6px;width:453px;height:131.10000000000002px;background:#bae7ff;border-radius:5px"></div><div class="txt" style="left:96px;top:-9.33px;font-size:22.6px;color:#303030;letter-spacing:0.1px"><i class="d">146"</i>&gt;</div><div class="txt" style="left:96px;top:41.57px;font-size:22.6px;color:#303030;letter-spacing:0.1px">&lt;<span style="color:#882a2a">XCUIElementTypeOther</span>&gt;</div><svg style="left:61px;top:96.10px" width="9" height="12" viewBox="0 0 9 12"><path d="M0.5 0.5 L8.5 6 L0.5 11.5 Z" fill="#262626"/></svg><div class="txt" style="left:96px;top:92.57px;font-size:22.6px;color:#303030;letter-spacing:0.1px">&lt;<span style="color:#882a2a">XCUIElementTypeStaticText</span> <span style="color:#8b4caf;font-style:italic">value</span>=<i class="d">"</i>Level</div><div class="txt" style="left:96px;top:136.17px;font-size:22.6px;color:#303030;letter-spacing:0.1px"><i class="d">147"</i> <span style="color:#8b4caf;font-style:italic">name</span>=<i class="d">"</i>label<i class="d">147"</i> <span style="color:#8b4caf;font-style:italic">label</span>=<i class="d">"</i>Level</div><div class="txt" style="left:96px;top:179.77px;font-size:22.6px;color:#303030;letter-spacing:0.1px"><i class="d">147"</i>&gt;</div><div class="txt" style="left:96px;top:230.57px;font-size:22.6px;color:#303030;letter-spacing:0.1px">&lt;<span style="color:#882a2a">XCUIElementTypeOther</span>&gt;</div><svg style="left:61px;top:285.10px" width="9" height="12" viewBox="0 0 9 12"><path d="M0.5 0.5 L8.5 6 L0.5 11.5 Z" fill="#262626"/></svg><div class="txt" style="left:96px;top:281.57px;font-size:22.6px;color:#303030;letter-spacing:0.1px">&lt;<span style="color:#882a2a">XCUIElementTypeStaticText</span> <span style="color:#8b4caf;font-style:italic">value</span>=<i class="d">"</i>Level</div><div class="txt" style="left:96px;top:325.17px;font-size:22.6px;color:#303030;letter-spacing:0.1px"><i class="d">148"</i> <span style="color:#8b4caf;font-style:italic">name</span>=<i class="d">"</i>label<i class="d">148"</i> <span style="color:#8b4caf;font-style:italic">label</span>=<i class="d">"</i>Level</div><div class="txt" style="left:96px;top:368.77px;font-size:22.6px;color:#303030;letter-spacing:0.1px"><i class="d">148"</i>&gt;</div><div class="txt" style="left:96px;top:419.57px;font-size:22.6px;color:#303030;letter-spacing:0.1px">&lt;<span style="color:#882a2a">XCUIElementTypeOther</span>&gt;</div><svg style="left:61px;top:474.10px" width="9" height="12" viewBox="0 0 9 12"><path d="M0.5 0.5 L8.5 6 L0.5 11.5 Z" fill="#262626"/></svg><div class="txt" style="left:96px;top:470.57px;font-size:22.6px;color:#303030;letter-spacing:0.1px">&lt;<span style="color:#882a2a">XCUIElementTypeStaticText</span> <span style="color:#8b4caf;font-style:italic">value</span>=<i class="d">"</i>Level</div><div class="txt" style="left:96px;top:514.17px;font-size:22.6px;color:#303030;letter-spacing:0.1px"><i class="d">149"</i> <span style="color:#8b4caf;font-style:italic">name</span>=<i class="d">"</i>label<i class="d">149"</i> <span style="color:#8b4caf;font-style:italic">label</span>=<i class="d">"</i>Level</div><div class="txt" style="left:96px;top:557.77px;font-size:22.6px;color:#303030;letter-spacing:0.1px"><i class="d">149"</i>&gt;</div><div class="txt" style="left:96px;top:608.57px;font-size:22.6px;color:#303030;letter-spacing:0.1px">&lt;<span style="color:#882a2a">XCUIElementTypeOther</span>&gt;</div><svg style="left:61px;top:663.10px" width="9" height="12" viewBox="0 0 9 12"><path d="M0.5 0.5 L8.5 6 L0.5 11.5 Z" fill="#262626"/></svg><div class="txt" style="left:96px;top:659.57px;font-size:22.6px;color:#303030;letter-spacing:0.1px">&lt;<span style="color:#882a2a">XCUIElementTypeStaticText</span> <span style="color:#8b4caf;font-style:italic">value</span>=<i class="d">"</i>Level</div><div class="txt" style="left:96px;top:703.17px;font-size:22.6px;color:#303030;letter-spacing:0.1px"><i class="d">150"</i> <span style="color:#8b4caf;font-style:italic">name</span>=<i class="d">"</i>label<i class="d">150"</i> <span style="color:#8b4caf;font-style:italic">label</span>=<i class="d">"</i>Level</div><div class="txt" style="left:96px;top:746.77px;font-size:22.6px;color:#303030;letter-spacing:0.1px"><i class="d">150"</i>&gt;</div><svg style="left:61px;top:801.70px" width="9" height="12" viewBox="0 0 9 12"><path d="M0.5 0.5 L8.5 6 L0.5 11.5 Z" fill="#262626"/></svg><div class="txt" style="left:96px;top:798.17px;font-size:22.6px;color:#303030;letter-spacing:0.1px">&lt;<span style="color:#882a2a">XCUIElementTypeStaticText</span> <span style="color:#8b4caf;font-style:italic">value</span>=<i class="d">"</i>Depth</div><div class="txt" style="left:96px;top:842.17px;font-size:22.6px;color:#303030;letter-spacing:0.1px">Reached<i class="d">"</i> <span style="color:#8b4caf;font-style:italic">name</span>=<i class="d">"</i>Depth</div><div class="txt" style="left:96px;top:885.77px;font-size:22.6px;color:#303030;letter-spacing:0.1px">Reached<i class="d">"</i> <span style="color:#8b4caf;font-style:italic">label</span>=<i class="d">"</i>Depth Reached<i class="d">"</i>&gt;</div></div><div class="a" style="left:1335px;top:209px;width:638px;height:1056.5px;background:#fff;border-radius:4px 4px 0 0"></div><div class="a" style="left:1335px;top:295px;width:638px;height:1.5px;background:#efefef"></div><svg style="left:1356.5px;top:240px" width="27" height="26" viewBox="0 0 27 26" fill="none" stroke="#262626" stroke-width="1.9" stroke-linecap="round" stroke-linejoin="round"><path d="M2 17 L14.5 3.5 L24 2 L23.3 11.5 L10 24.5 Z"/><circle cx="17.8" cy="8.2" r="1.5"/></svg><div class="txt" style="left:1389px;top:240.96px;font-size:24.5px;color:#262626;font-weight:400;font-style:normal;-webkit-text-stroke:0.7px #262626;letter-spacing:1.1px">Selected Element</div><div class="a" style="left:1357.5px;top:317px;width:56.700000000000045px;height:57px;border:1.5px solid #d9d9d9;border-radius:4px;background:#fff;box-shadow:0 2px 0 rgba(0,0,0,0.016)"></div><div class="a" style="left:1428.2px;top:317px;width:388.20000000000005px;height:57px;border:1.5px solid #d9d9d9;border-radius:4px;background:#fff;box-shadow:0 2px 0 rgba(0,0,0,0.016)"></div><div class="a" style="left:1702.05px;top:317px;width:1.5px;height:57px;background:#d9d9d9"></div><div class="a" style="left:1758.85px;top:317px;width:1.5px;height:57px;background:#d9d9d9"></div><div class="a" style="left:1834.3px;top:317px;width:112.90000000000009px;height:57px;border:1.5px solid #d9d9d9;border-radius:4px;background:#fff;box-shadow:0 2px 0 rgba(0,0,0,0.016)"></div><div class="a" style="left:1889.95px;top:317px;width:1.5px;height:57px;background:#d9d9d9"></div><div class="txt" style="left:1450px;top:334.62px;font-size:21px;color:#bfbfbf;font-weight:400;font-style:normal;letter-spacing:0.8px">Enter Keys to Send</div><svg style="left:1372px;top:332px" width="27" height="27" viewBox="0 0 27 27" fill="none" stroke="#262626" stroke-width="2" stroke-linecap="round" stroke-linejoin="round"><circle cx="13.5" cy="13.5" r="8"/><circle cx="13.5" cy="13.5" r="3" fill="#262626" stroke="none"/><path d="M13.5 1 V5.5 M13.5 21.5 V26 M1 13.5 H5.5 M21.5 13.5 H26"/></svg><svg style="left:1718px;top:332px" width="26" height="26" viewBox="0 0 26 26" fill="none" stroke="#262626" stroke-width="1.9" stroke-linecap="round" stroke-linejoin="round"><path d="M1.5 1.8 L24.5 13 L1.5 24.2 L5.5 13 Z"/><path d="M5.5 13 H11"/></svg><svg style="left:1776px;top:333px" width="24" height="24" viewBox="0 0 24 24" fill="none" stroke="#262626" stroke-width="1.8" stroke-linecap="round" stroke-linejoin="round"><path d="M9.5 8 V2 H14.5 V8"/><rect x="2" y="8" width="20" height="4.8"/><path d="M3 12.8 L2 22.5 H22 L21 12.8"/><path d="M8 22.5 V18 M12 22.5 V17 M16 22.5 V18"/></svg><svg style="left:1852px;top:332px" width="21" height="27" viewBox="0 0 21 27" fill="none" stroke="#262626" stroke-width="1.9" stroke-linecap="round" stroke-linejoin="round"><path d="M4.5 1.5 H19.5 V21"/><path d="M1.5 5 H15.5 V25.5 H5 L1.5 22 Z"/><path d="M1.8 22 H5 V25.3"/></svg><svg style="left:1908.5px;top:334px" width="21" height="24" viewBox="0 0 21 24" fill="none" stroke="#262626" stroke-width="1.9" stroke-linecap="round" stroke-linejoin="round"><path d="M1.5 1.5 H19.5 M1.5 22.5 H19.5"/><path d="M4.5 1.5 C4.5 8 8 10 10.5 12 C13 10 16.5 8 16.5 1.5"/><path d="M4.5 22.5 C4.5 16 8 14 10.5 12 C13 14 16.5 16 16.5 22.5"/></svg><div class="a" style="left:1357px;top:411px;width:590px;height:854px;overflow:hidden"><div class="a" style="left:0;top:0;width:590px;height:62.89999999999998px;background:#fafafa"></div><div class="a" style="left:0;top:62.14999999999998px;width:590px;height:1.5px;background:#f0f0f0"></div><div class="a" style="left:236.04999999999995px;top:13.800000000000011px;width:1.5px;height:33.6px;background:#ececec"></div><div class="txt" style="left:14.400000000000091px;top:19.68px;font-size:22px;color:#262626;font-weight:401;-webkit-text-stroke:0.7px #262626;letter-spacing:0.4px">Find By</div><div class="txt" style="left:252.79999999999995px;top:19.68px;font-size:22px;color:#262626;font-weight:401;-webkit-text-stroke:0.7px #262626;letter-spacing:0.4px">Selector</div><div class="txt" style="left:14.400000000000091px;top:83.18px;font-size:22px;color:#262626;font-weight:400;letter-spacing:0.6px">accessibility id</div><div class="txt" style="left:252.79999999999995px;top:83.18px;font-size:22px;color:#262626;font-weight:400;letter-spacing:0.6px">label150</div><div class="a" style="left:0;top:125.54999999999995px;width:590px;height:1.5px;background:#f0f0f0"></div><div class="txt" style="left:14.400000000000091px;top:146.98px;font-size:22px;color:#262626;font-weight:400;letter-spacing:0.6px">-ios class chain</div><div class="txt" style="left:14.400000000000091px;top:179.58px;font-size:22px;color:#1890ff;font-weight:401;-webkit-text-stroke:0.7px #1890ff;letter-spacing:1.8px">(docs)</div><div class="txt" style="left:252.79999999999995px;top:163.98px;font-size:22px;color:#262626;font-weight:400;letter-spacing:0.6px">**/XCUIElementTypeStaticText[`name == "label150"`]</div><div class="a" style="left:0;top:221.75px;width:590px;height:1.5px;background:#f0f0f0"></div><div class="txt" style="left:14.400000000000091px;top:243.78px;font-size:22px;color:#262626;font-weight:400;letter-spacing:0.6px">-ios predicate string</div><div class="txt" style="left:14.400000000000091px;top:275.98px;font-size:22px;color:#1890ff;font-weight:401;-webkit-text-stroke:0.7px #1890ff;letter-spacing:1.8px">(docs)</div><div class="txt" style="left:252.79999999999995px;top:259.38px;font-size:22px;color:#262626;font-weight:400;letter-spacing:0.6px">name == "label150"</div><div class="a" style="left:0;top:318.45000000000005px;width:590px;height:1.5px;background:#f0f0f0"></div><div class="txt" style="left:14.400000000000091px;top:339.88px;font-size:22px;color:#262626;font-weight:400;letter-spacing:0.6px">xpath</div><div class="txt" style="left:252.79999999999995px;top:339.88px;font-size:22px;color:#262626;font-weight:400;letter-spacing:0.6px">//XCUIElementTypeStaticText[@name="label150"]</div><div class="a" style="left:0;top:381.85px;width:590px;height:1.5px;background:#f0f0f0"></div><div class="a" style="left:0;top:416.79999999999995px;width:590px;height:62.0px;background:#fafafa"></div><div class="a" style="left:0;top:478.04999999999995px;width:590px;height:1.5px;background:#f0f0f0"></div><div class="a" style="left:136.25px;top:430px;width:1.5px;height:33.6px;background:#ececec"></div><div class="txt" style="left:14.599999999999909px;top:436.08px;font-size:22px;color:#262626;font-weight:401;-webkit-text-stroke:0.7px #262626;letter-spacing:1.3px">Attribute</div><div class="txt" style="left:152.5999999999999px;top:436.08px;font-size:22px;color:#262626;font-weight:401;-webkit-text-stroke:0.7px #262626;letter-spacing:0.4px">Value</div><div class="txt" style="left:14.599999999999909px;top:499.78px;font-size:22px;color:#262626;font-weight:400;letter-spacing:0.6px">elementId</div><div class="txt" style="left:152.5999999999999px;top:499.78px;font-size:22px;color:#262626;font-weight:400;letter-spacing:1.55px">15000000-0000-0000-093A-000000000000</div><div class="a" style="left:0;top:541.9px;width:590px;height:1.5px;background:#f0f0f0"></div><div class="txt" style="left:14.599999999999909px;top:563.63px;font-size:22px;color:#262626;font-weight:400;letter-spacing:0.6px">type</div><div class="txt" style="left:152.5999999999999px;top:563.63px;font-size:22px;color:#262626;font-weight:400;letter-spacing:0.32px">XCUIElementTypeStaticText</div><div class="a" style="left:0;top:605.75px;width:590px;height:1.5px;background:#f0f0f0"></div><div class="txt" style="left:14.599999999999909px;top:627.48px;font-size:22px;color:#262626;font-weight:400;letter-spacing:0.6px">value</div><div class="txt" style="left:152.5999999999999px;top:627.48px;font-size:22px;color:#262626;font-weight:400;letter-spacing:0.6px">Level 150</div><div class="a" style="left:0;top:669.5999999999999px;width:590px;height:1.5px;background:#f0f0f0"></div><div class="txt" style="left:14.599999999999909px;top:691.33px;font-size:22px;color:#262626;font-weight:400;letter-spacing:0.6px">name</div><div class="txt" style="left:152.5999999999999px;top:691.33px;font-size:22px;color:#262626;font-weight:400;letter-spacing:0.6px">label150</div><div class="a" style="left:0;top:733.4499999999998px;width:590px;height:1.5px;background:#f0f0f0"></div><div class="txt" style="left:14.599999999999909px;top:755.18px;font-size:22px;color:#262626;font-weight:400;letter-spacing:0.6px">label</div><div class="txt" style="left:152.5999999999999px;top:755.18px;font-size:22px;color:#262626;font-weight:400;letter-spacing:0.6px">Level 150</div><div class="a" style="left:0;top:797.3px;width:590px;height:1.5px;background:#f0f0f0"></div><div class="txt" style="left:14.599999999999909px;top:819.03px;font-size:22px;color:#262626;font-weight:400;letter-spacing:0.6px">enabled</div><div class="txt" style="left:152.5999999999999px;top:819.03px;font-size:22px;color:#262626;font-weight:400;letter-spacing:0.6px">true</div><div class="a" style="left:0;top:861.1499999999999px;width:590px;height:1.5px;background:#f0f0f0"></div><div class="txt" style="left:14.599999999999909px;top:882.88px;font-size:22px;color:#262626;font-weight:400;letter-spacing:0.6px">visible</div><div class="txt" style="left:152.5999999999999px;top:882.88px;font-size:22px;color:#262626;font-weight:400;letter-spacing:0.6px">true</div><div class="a" style="left:0;top:925.0px;width:590px;height:1.5px;background:#f0f0f0"></div><div class="a" style="left:576px;top:0;width:14px;height:382.6px;background:linear-gradient(to right,rgba(0,0,0,0),rgba(0,0,0,0.025) 50%,rgba(0,0,0,0.08))"></div><div class="a" style="left:576px;top:416.79999999999995px;width:14px;height:600px;background:linear-gradient(to right,rgba(0,0,0,0),rgba(0,0,0,0.025) 50%,rgba(0,0,0,0.08))"></div></div><div class="a" style="left:0;top:1180px;width:1999px;height:108px;background:linear-gradient(rgba(0,0,0,0),rgba(0,0,0,0.05) 78.7%,rgba(0,0,0,0.04) 79%,rgba(0,0,0,0.1))"></div></div></body></html>
